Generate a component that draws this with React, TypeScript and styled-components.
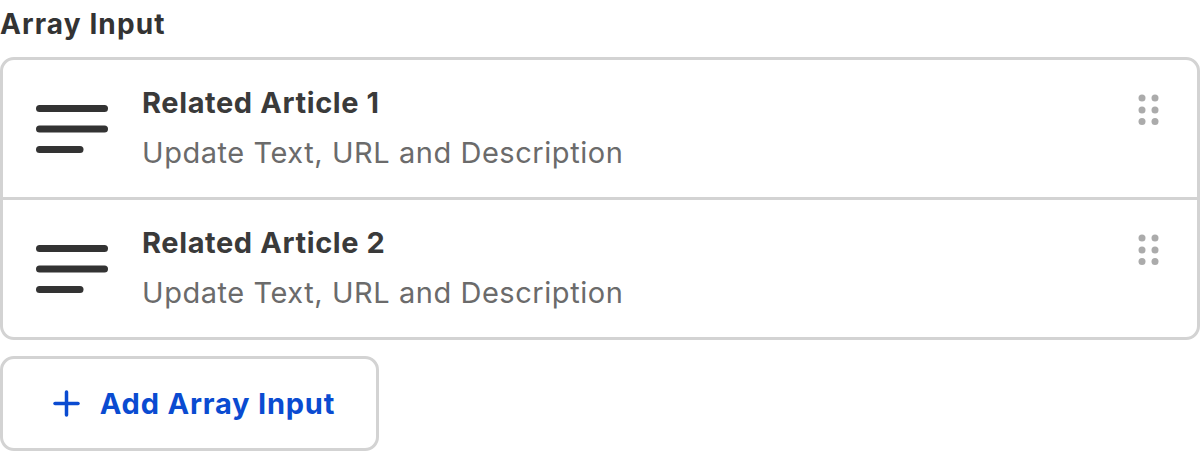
import React from "react";
import styled, { createGlobalStyle } from "styled-components";

const Global = createGlobalStyle`
  html, body { margin: 0; padding: 0; background: #fff; }
  body { font-family: Inter, "Noto Sans", sans-serif; }
`;

const Page = styled.div`
  width: 1200px;
  display: flex;
  flex-direction: column;
`;

const Heading = styled.div`
  font-size: 28px;
  letter-spacing: 1.1px;
  font-weight: 700;
  color: #333;
  line-height: 48px;
  height: 48px;
`;

const List = styled.div`
  margin-top: 9px;
  border: 3px solid #d3d3d3;
  border-radius: 14px;
  display: flex;
  flex-direction: column;
  overflow: hidden;
`;

const Row = styled.div<{ $divider?: boolean }>`
  height: 137px;
  display: flex;
  align-items: center;
  padding: 0 36px 0 33px;
  border-top: ${(p) => (p.$divider ? "3px solid #d3d3d3" : "none")};
`;

const MenuIcon = styled.svg`
  width: 72px;
  height: 48px;
  flex: none;
`;

const Texts = styled.div`
  flex: 1;
  margin-left: 34px;
  display: flex;
  flex-direction: column;
  gap: 10px;
  margin-top: -1px;
`;

const Title = styled.div`
  font-size: 29px;
  letter-spacing: 0.6px;
  font-weight: 700;
  color: #3a3a3a;
  line-height: 40px;
`;

const Subtitle = styled.div`
  font-size: 29px;
  letter-spacing: 0.55px;
  font-weight: 400;
  color: #6b6b6b;
  line-height: 40px;
`;

const Handle = styled.svg`
  width: 22px;
  height: 32px;
  flex: none;
  margin-right: 1px;
  align-self: flex-start;
  margin-top: 34px;
`;

const AddButton = styled.button`
  margin-top: 16px;
  width: 379px;
  height: 95px;
  border: 3px solid #d3d3d3;
  border-radius: 14px;
  background: #fff;
  display: flex;
  align-items: center;
  justify-content: center;
  gap: 20px;
  font-family: inherit;
  font-size: 29px;
  letter-spacing: 0.8px;
  font-weight: 700;
  color: #0a4bd1;
  padding: 0 0 0 9px;
`;

const Menu = () => (
  <MenuIcon viewBox="0 0 72 48">
    <g stroke="#333" strokeWidth="7" strokeLinecap="round">
      <line x1="3.5" y1="3.5" x2="68.5" y2="3.5" />
      <line x1="3.5" y1="24" x2="68.5" y2="24" />
      <line x1="3.5" y1="44.5" x2="44" y2="44.5" />
    </g>
  </MenuIcon>
);

const Dots = () => (
  <Handle viewBox="0 0 22 32">
    <g fill="#ababab">
      {[4, 16, 27.5].map((y) => (
        <React.Fragment key={y}>
          <circle cx="4" cy={y} r="3.5" />
          <circle cx="17" cy={y} r="3.5" />
        </React.Fragment>
      ))}
    </g>
  </Handle>
);

const items = ["Related Article 1", "Related Article 2"];

export default function App() {
  return (
    <Page>
      <Global />
      <Heading>Array Input</Heading>
      <List>
        {items.map((t, i) => (
          <Row key={t} $divider={i > 0}>
            <Menu />
            <Texts>
              <Title>{t}</Title>
              <Subtitle>Update Text, URL and Description</Subtitle>
            </Texts>
            <Dots />
          </Row>
        ))}
      </List>
      <AddButton>
        <svg width="27" height="27" viewBox="0 0 27 27">
          <g stroke="#0a4bd1" strokeWidth="3.5" strokeLinecap="round">
            <line x1="13.5" y1="2" x2="13.5" y2="25" />
            <line x1="2" y1="13.5" x2="25" y2="13.5" />
          </g>
        </svg>
        <span>Add Array Input</span>
      </AddButton>
    </Page>
  );
}
